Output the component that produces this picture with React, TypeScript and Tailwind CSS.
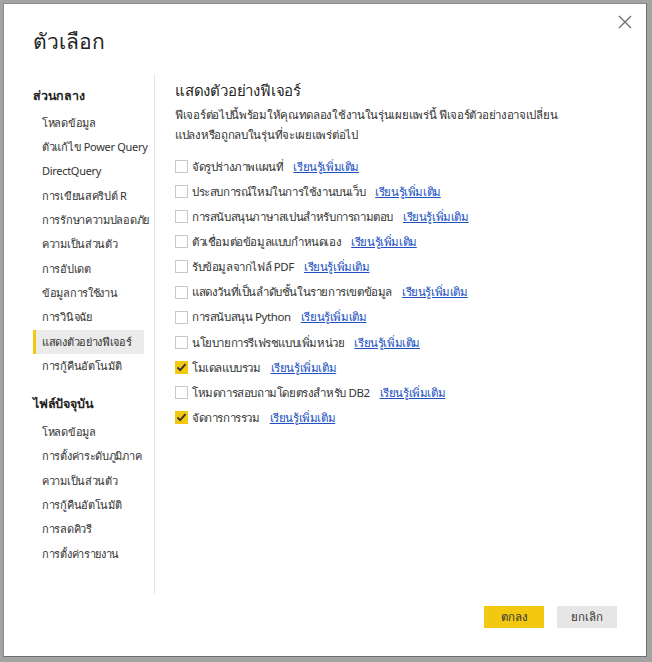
import React from 'react';

const generalItems = [
  'โหลดข้อมูล',
  'ตัวแก้ไข Power Query',
  'DirectQuery',
  'การเขียนสคริปต์ R',
  'การรักษาความปลอดภัย',
  'ความเป็นส่วนตัว',
  'การอัปเดต',
  'ข้อมูลการใช้งาน',
  'การวินิจฉัย',
  'แสดงตัวอย่างฟีเจอร์',
  'การกู้คืนอัตโนมัติ',
];

const fileItems = [
  'โหลดข้อมูล',
  'การตั้งค่าระดับภูมิภาค',
  'ความเป็นส่วนตัว',
  'การกู้คืนอัตโนมัติ',
  'การลดคิวรี',
  'การตั้งค่ารายงาน',
];

const features = [
  { label: 'จัดรูปร่างภาพแผนที่', checked: false },
  { label: 'ประสบการณ์ใหม่ในการใช้งานบนเว็บ', checked: false },
  { label: 'การสนับสนุนภาษาสเปนสำหรับการถามตอบ', checked: false },
  { label: 'ตัวเชื่อมต่อข้อมูลแบบกำหนดเอง', checked: false },
  { label: 'รับข้อมูลจากไฟล์ PDF', checked: false },
  { label: 'แสดงวันที่เป็นลำดับชั้นในรายการเขตข้อมูล', checked: false },
  { label: 'การสนับสนุน Python', checked: false },
  { label: 'นโยบายการรีเฟรชแบบเพิ่มหน่วย', checked: false },
  { label: 'โมเดลแบบรวม', checked: true },
  { label: 'โหมดการสอบถามโดยตรงสำหรับ DB2', checked: false },
  { label: 'จัดการการรวม', checked: true },
];

const NavItem: React.FC<{ label: string; active?: boolean }> = ({ label, active }) => (
  <div
    className={`h-[24.3px] flex items-center whitespace-nowrap text-[11px] tracking-[-0.3px] text-[#333] ${
      active ? 'bg-[#ebebeb] border-l-[3px] border-[#f2c811] pl-[6px]' : 'pl-[9px]'
    }`}
  >
    {label}
  </div>
);

const Checkbox: React.FC<{ checked: boolean }> = ({ checked }) =>
  checked ? (
    <span className="w-[13px] h-[13px] bg-[#f2c811] flex items-center justify-center shrink-0">
      <svg width="11" height="11" viewBox="0 0 11 11">
        <path d="M1.5 5.5 L4.2 8.2 L9.5 2.2" fill="none" stroke="#333" strokeWidth="1.8" />
      </svg>
    </span>
  ) : (
    <span className="w-[13px] h-[13px] border border-[#c8c8c8] bg-white shrink-0" />
  );

export default function App() {
  return (
    <div
      className="w-[652px] h-[662px] bg-[#a3a3a3] pl-[3px] pt-[3px] pr-[5px] pb-[5px]"
      style={{ fontFamily: '"Noto Sans", "DejaVu Sans", sans-serif' }}
    >
      <div className="w-full h-full bg-white border border-[#6e6e6e] border-t-[#8a8a8a] border-l-[#8a8a8a] flex flex-col relative">
        <button className="absolute right-[14px] top-[11px] w-[14px] h-[14px]">
          <svg width="14" height="14" viewBox="0 0 14 14">
            <path d="M1 1 L13 13 M13 1 L1 13" stroke="#6b6b6b" strokeWidth="1.3" />
          </svg>
        </button>

        <div className="pl-[29px] pt-[22px] h-[70px] text-[21px] font-light text-[#252423]">ตัวเลือก</div>

        <div className="flex flex-1 min-h-0">
          <div className="w-[151px] shrink-0 border-r border-[#e6e6e6] pl-[29px] pr-[10px] pt-[10px] mb-[62px]">
            <div className="text-[12.5px] tracking-[-0.2px] font-bold text-[#252423] h-[24px] flex items-center mb-[3px]">
              ส่วนกลาง
            </div>
            {generalItems.map((it) => (
              <NavItem key={it} label={it} active={it === 'แสดงตัวอย่างฟีเจอร์'} />
            ))}
            <div className="text-[12.5px] tracking-[-0.2px] font-bold text-[#252423] h-[24px] flex items-center mt-[14px] mb-[4px]">
              ไฟล์ปัจจุบัน
            </div>
            {fileItems.map((it) => (
              <NavItem key={it + '2'} label={it} />
            ))}
          </div>

          <div className="flex-1 pl-[20px] pr-[30px] pt-[3px] flex flex-col">
            <div className="text-[15px] tracking-[-0.2px] text-[#252423] h-[26px] flex items-center">แสดงตัวอย่างฟีเจอร์</div>
            <p className="text-[11.5px] tracking-[-0.3px] text-[#333] leading-[20px] mt-[2px] mb-[9px] whitespace-nowrap">
              ฟีเจอร์ต่อไปนี้พร้อมให้คุณทดลองใช้งานในรุ่นเผยแพร่นี้ ฟีเจอร์ตัวอย่างอาจเปลี่ยน
              <br />
              แปลงหรือถูกลบในรุ่นที่จะเผยแพร่ต่อไป
            </p>
            <div className="flex flex-col">
              {features.map((f) => (
                <div
                  key={f.label}
                  className="h-[25.1px] flex items-center gap-[4px] text-[11.5px] tracking-[-0.4px] text-[#333] whitespace-nowrap"
                >
                  <Checkbox checked={f.checked} />
                  <span>{f.label}</span>
                  <a href="#" className="ml-[6px] text-[#2050c0] underline">
                    เรียนรู้เพิ่มเติม
                  </a>
                </div>
              ))}
            </div>
          </div>
        </div>

        <div className="absolute right-[29px] bottom-[28px] flex gap-[13px]">
          <button className="w-[60px] h-[22px] bg-[#f2c811] text-[11.5px] text-[#333]">ตกลง</button>
          <button className="w-[60px] h-[22px] bg-[#e6e6e6] text-[11.5px] text-[#333]">ยกเลิก</button>
        </div>
      </div>
    </div>
  );
}
